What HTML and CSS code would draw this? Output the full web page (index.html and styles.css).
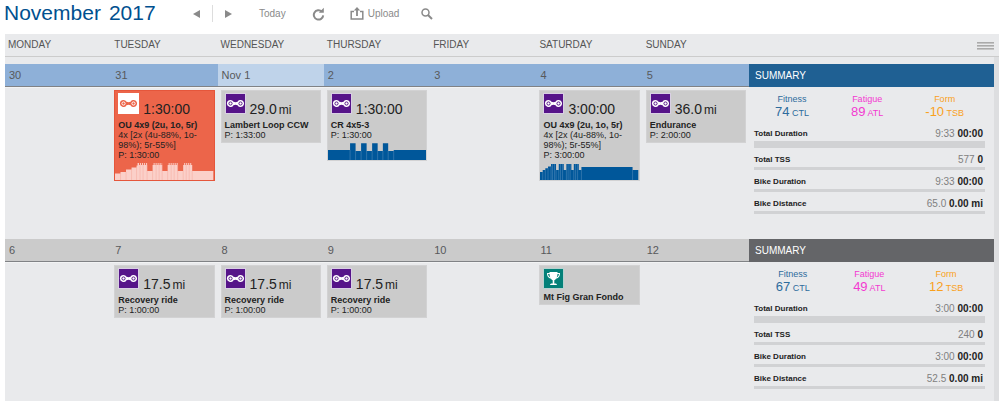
FILE: index.html
```html
<!DOCTYPE html>
<html lang="en">
<head>
<meta charset="utf-8">
<title>Training calendar</title>
<link rel="stylesheet" href="styles.css">
</head>
<body>
<svg class="defs" aria-hidden="true">
  <symbol id="chain" viewBox="1 1 19 19">
    <path class="link" d="M5.500 7a3.500 3.500 0 0 1 3 1.800q2 .8 4 0a3.500 3.500 0 1 1 0 3.400q-2-.8-4 0A3.500 3.500 0 1 1 5.500 7z"/>
    <circle class="pin" cx="5.500" cy="10.500" r="1.600"/>
    <circle class="pin" cx="15.500" cy="10.500" r="1.600"/>
  </symbol>
</svg>
<header class="toolbar">
  <h1 class="title"><span>November</span><span>2017</span></h1>
  <nav class="tools">
    <button class="tool" aria-label="Previous month"><svg width="7" height="8"><path d="M7 0v8L0 4z"/></svg></button>
    <span class="divider"></span>
    <button class="tool next" aria-label="Next month"><svg width="7" height="8"><path d="M0 0v8l7-4z"/></svg></button>
    <button class="tool today">Today</button>
    <button class="tool refresh" aria-label="Refresh"><svg width="13" height="14" viewBox="0 0 13 14"><path d="M9.800 4.500A4.700 4.700 0 1 0 11.200 8.300" fill="none" stroke="#8a8a8a" stroke-width="2"/><path d="M11.800.8v5H6.800z"/></svg></button>
    <button class="tool upload"><svg width="14" height="13" viewBox="0 0 14 13"><path d="M4 4.500H1.200V12h11.600V4.500H10" fill="none" stroke="#8a8a8a" stroke-width="1.500"/><path d="M7 0l3.200 3.500H7.900V9H6.100V3.500H3.800z"/></svg>Upload</button>
    <button class="tool search" aria-label="Search"><svg width="12" height="12" viewBox="0 0 12 12"><circle cx="4.500" cy="4.500" r="3.500" fill="none" stroke="#8a8a8a" stroke-width="1.500"/><path d="M7 7l4 4" stroke="#8a8a8a" stroke-width="2"/></svg></button>
  </nav>
</header>
<main class="calendar">
  <div class="weekdays">
    <span>MONDAY</span><span>TUESDAY</span><span>WEDNESDAY</span><span>THURSDAY</span><span>FRIDAY</span><span>SATURDAY</span><span>SUNDAY</span>
    <button class="menu" aria-label="Menu"><i></i><i></i><i></i></button>
  </div>
  <div class="weeks">
    <section class="week current">
      <div class="day"><h2 class="date">30</h2></div>
      <div class="day"><h2 class="date">31</h2>
        <article class="card missed">
          <div class="head"><svg class="icon"><use href="#chain"/></svg><span class="value">1:30:00</span></div>
          <h3>OU 4x9 (2u, 1o, 5r)</h3>
          <p>4x [2x (4u-88%, 1o-98%); 5r-55%]</p>
          <p>P: 1:30:00</p>
          <svg class="chart" viewBox="0 0 98 20" preserveAspectRatio="none">
            <path d="M0 20V13.500H5.500V12H11V9.500H16.500V7.500H21.500V5.500H22.500V3H24V5H25V3H26V5H27V3H28V5H29V3H30V5H31V3H32V11H37.500V5H38.500V3H39.500V5H40.500V3H41.500V5H42.500V3H43.500V5H44.500V3H45.500V5H46.500V3H47V11H52.500V5H53.500V3H54.500V5H55.500V3H56.500V5H57.500V3H58.500V5H59.500V3H60.500V5H61.500V3H62.500V11H68V5H69V3H70V5H71V3H72V5H73V3H74V5H75V3H76V5H77V11H98V20z"/>
            <path class="seam" d="M5.500 13V20M11 12V20M16.500 9V20M21.500 7V20M25 5V20M28 5V20M32 5V20M37.500 11V20M41 5V20M44 5V20M47 5V20M52.500 11V20M56 5V20M59 5V20M62.500 5V20M68 11V20M71 5V20M74 5V20M77 11V20"/>
          </svg>
        </article>
      </div>
      <div class="day now"><h2 class="date">Nov 1</h2>
        <article class="card">
          <div class="head"><svg class="icon"><use href="#chain"/></svg><span class="value">29.0<small>mi</small></span></div>
          <h3>Lambert Loop CCW</h3>
          <p>P: 1:33:00</p>
        </article>
      </div>
      <div class="day"><h2 class="date">2</h2>
        <article class="card">
          <div class="head"><svg class="icon"><use href="#chain"/></svg><span class="value">1:30:00</span></div>
          <h3>CR 4x5-3</h3>
          <p>P: 1:30:00</p>
          <svg class="chart" viewBox="0 0 98 20" preserveAspectRatio="none">
            <path d="M0 20V10H22V3.300H27.500V11H33V3.300H38.500V11H44V3.300H49.500V11H54.700V3.300H60V11H65.500V10H98V20z"/>
            <path class="seam" d="M22 10V20M27.500 11V20M33 11V20M38.500 11V20M44 11V20M49.500 11V20M54.700 11V20M60 11V20M65.500 11V20"/>
          </svg>
        </article>
      </div>
      <div class="day"><h2 class="date">3</h2></div>
      <div class="day"><h2 class="date">4</h2>
        <article class="card">
          <div class="head"><svg class="icon"><use href="#chain"/></svg><span class="value">3:00:00</span></div>
          <h3>OU 4x9 (2u, 1o, 5r)</h3>
          <p>4x [2x (4u-88%, 1o-98%); 5r-55%]</p>
          <p>P: 3:00:00</p>
          <svg class="chart" viewBox="0 0 98 20" preserveAspectRatio="none">
            <path d="M0 20V12H2.700V10H5.300V8.300H8V6.500H11V4H16V10H18.700V4H23.700V10H26.300V4H31.300V10H33.700V4H38.700V10H41.300V7H92.300V10H98V20z"/>
            <path class="seam" d="M2.700 12V20M5.300 10V20M8 8V20M11 6V20M12.500 4V20M14.500 4V20M16 10V20M18.700 10V20M20.500 4V20M22.500 4V20M26.300 10V20M28 4V20M30 4V20M33.700 10V20M35.500 4V20M37.500 4V20M41.300 10V20M92.300 10V20"/>
          </svg>
        </article>
      </div>
      <div class="day"><h2 class="date">5</h2>
        <article class="card">
          <div class="head"><svg class="icon"><use href="#chain"/></svg><span class="value">36.0<small>mi</small></span></div>
          <h3>Endurance</h3>
          <p>P: 2:00:00</p>
        </article>
      </div>
      <aside class="summary">
        <h2>SUMMARY</h2>
        <div class="stats">
          <div class="fitness">Fitness<div><b>74</b> CTL</div></div>
          <div class="fatigue">Fatigue<div><b>89</b> ATL</div></div>
          <div class="form">Form<div><b>-10</b> TSB</div></div>
        </div>
        <div class="total first"><span>Total Duration</span><span class="amount">9:33 <b>00:00</b></span></div>
        <div class="total"><span>Total TSS</span><span class="amount">577 <b>0</b></span></div>
        <div class="total"><span>Bike Duration</span><span class="amount">9:33 <b>00:00</b></span></div>
        <div class="total"><span>Bike Distance</span><span class="amount">65.0 <b>0.00 mi</b></span></div>
      </aside>
    </section>
    <section class="week">
      <div class="day"><h2 class="date">6</h2></div>
      <div class="day"><h2 class="date">7</h2>
        <article class="card">
          <div class="head"><svg class="icon"><use href="#chain"/></svg><span class="value">17.5<small>mi</small></span></div>
          <h3>Recovery ride</h3>
          <p>P: 1:00:00</p>
        </article>
      </div>
      <div class="day"><h2 class="date">8</h2>
        <article class="card">
          <div class="head"><svg class="icon"><use href="#chain"/></svg><span class="value">17.5<small>mi</small></span></div>
          <h3>Recovery ride</h3>
          <p>P: 1:00:00</p>
        </article>
      </div>
      <div class="day"><h2 class="date">9</h2>
        <article class="card">
          <div class="head"><svg class="icon"><use href="#chain"/></svg><span class="value">17.5<small>mi</small></span></div>
          <h3>Recovery ride</h3>
          <p>P: 1:00:00</p>
        </article>
      </div>
      <div class="day"><h2 class="date">10</h2></div>
      <div class="day"><h2 class="date">11</h2>
        <article class="card">
          <div class="head"><svg class="icon event" viewBox="1 1 19 19"><path d="M6.500 4h8v1h2.500q.3 4.500-4 5.800-.7 1.200-1.700 1.500v3.200h1.500q1 .2 1.200 1.500H7q.2-1.300 1.200-1.500h1.500v-3.200Q8.700 12 8 10.800 3.700 9.500 4 5h2.500z" fill="#fff"/><path d="M5 6h1.500q.1 2 .8 3.400Q5.200 8.500 5 6zM16 6h-1.500q-.1 2-.8 3.400Q15.800 8.500 16 6z" fill="#038078"/></svg></div>
          <h3>Mt Fig Gran Fondo</h3>
        </article>
      </div>
      <div class="day"><h2 class="date">12</h2></div>
      <aside class="summary">
        <h2>SUMMARY</h2>
        <div class="stats">
          <div class="fitness">Fitness<div><b>67</b> CTL</div></div>
          <div class="fatigue">Fatigue<div><b>49</b> ATL</div></div>
          <div class="form">Form<div><b>12</b> TSB</div></div>
        </div>
        <div class="total first"><span>Total Duration</span><span class="amount">3:00 <b>00:00</b></span></div>
        <div class="total"><span>Total TSS</span><span class="amount">240 <b>0</b></span></div>
        <div class="total"><span>Bike Duration</span><span class="amount">3:00 <b>00:00</b></span></div>
        <div class="total"><span>Bike Distance</span><span class="amount">52.5 <b>0.00 mi</b></span></div>
      </aside>
    </section>
  </div>
</main>
</body>
</html>
```
FILE: styles.css
```css
* { box-sizing: border-box; }
body {
  margin: 0;
  height: 100vh;
  display: flex;
  flex-direction: column;
  overflow: hidden;
  background: #fff;
  color: #222;
  font-family: "Liberation Sans", Arial, sans-serif;
}
h1, h2, h3, p { margin: 0; font-weight: normal; }
button { border: 0; padding: 0; background: none; font: inherit; color: inherit; }
svg { display: block; }
.defs { display: none; }

.toolbar { display: flex; align-items: center; height: 34px; padding: 0 5px 8px 4px; }
.title { display: flex; gap: 8px; width: 189px; font-size: 21px; line-height: 26px; color: #00508f; }
.tools { display: flex; align-items: center; height: 26px; padding-top: 1px; }
.tool { display: flex; align-items: center; gap: 4px; font-size: 10px; line-height: 14px; color: #8a8a8a; fill: #8a8a8a; }
.divider { width: 1px; height: 17px; margin: 0 12px; background: #ddd; }
.today { margin-left: 27px; }
.refresh { margin-left: 26px; }
.upload { margin-left: 25px; }
.search { margin-left: 22px; }

.calendar { flex: 1; min-height: 0; display: flex; flex-direction: column; margin-left: 5px; background: #e9eaec; }
.weekdays, .week { display: grid; grid-template-columns: repeat(7, minmax(0, 1fr)) 245px; }
.weekdays { flex: none; height: 23px; padding-right: 5px; border-bottom: 1px solid #ccc; font-size: 10px; line-height: 22px; color: #555; }
.weekdays span { padding-left: 3px; }
.menu { justify-self: end; align-self: center; display: grid; gap: 2px; width: 17px; }
.menu i { height: 1px; background: #aaa; box-shadow: 0 1px #c4c4c4; }
.weeks { flex: 1; min-height: 0; padding-top: 7px; border-right: 5px solid #dddee0; overflow: hidden; }
.week { min-height: 175px; }

.date {
  height: 23px;
  padding-left: 4px;
  background: #cbcbcb;
  border-bottom: 1px solid #808285;
  box-shadow: 0 1px #f2f3f4;
  font-size: 11px;
  line-height: 23px;
  color: #58595b;
}
.current .date { background: #8eb0d8; }
.current .now .date { background: #bfd3ea; }

.card {
  margin: 3px 3px 0;
  padding: 2px 2px 2px 3px;
  border: 1px solid #d2d2d3;
  background: #cbcbcb;
  font-size: 9px;
  line-height: 10px;
}
.card h3 { font-size: 9px; font-weight: bold; white-space: nowrap; }
.head { display: flex; gap: 4px; min-height: 24px; }
.icon { flex: none; width: 21px; height: 21px; border: 1px solid #d9cfe4; background: #561489; }
.icon.event { border-color: #b5d3d1; background: #038078; }
.link { fill: var(--link, #fff); }
.pin { fill: var(--link, #fff); stroke: var(--pin, #561489); }
.value { padding-top: 8px; height: 27px; font-size: 14px; line-height: 16px; white-space: nowrap; }
.value small { margin-left: 2px; font-size: 12px; }
.chart { width: calc(100% + 5px); height: 20px; margin: 0 -2px -2px -3px; fill: #00579a; }
.seam { fill: none; stroke: #5b91bd; stroke-width: 0.5; }

.missed { background: #ec654a; border-color: #e5563b; }
.missed .icon { border-color: #fff; background: #fff; --link: #ec654a; --pin: #fff; }
.missed .chart { fill: #fbd0c9; }
.missed .seam { stroke: #f4a99c; }

.summary h2 { height: 23px; padding-left: 6px; background: #646568; font-size: 10px; line-height: 23px; color: #fff; }
.current .summary h2 { background: #1f6093; }
.stats { display: flex; justify-content: space-around; margin: 6px 9px 0 5px; height: 33px; font-size: 9px; line-height: 12px; text-align: center; }
.stats b { font-size: 13px; line-height: 14px; font-weight: normal; }
.fitness { color: #2e6c9d; }
.fatigue { color: #f339d1; }
.form { color: #f9a01b; }
.total { display: flex; justify-content: space-between; margin: 4px 9px 0 5px; border-bottom: 3px solid #d1d2d4; font-size: 8px; font-weight: bold; line-height: 15px; }
.first { margin-top: 0; border-bottom-width: 7px; }
.amount { padding-right: 2px; font-size: 10px; font-weight: normal; color: #808080; }
.amount b { color: #222; }
```
